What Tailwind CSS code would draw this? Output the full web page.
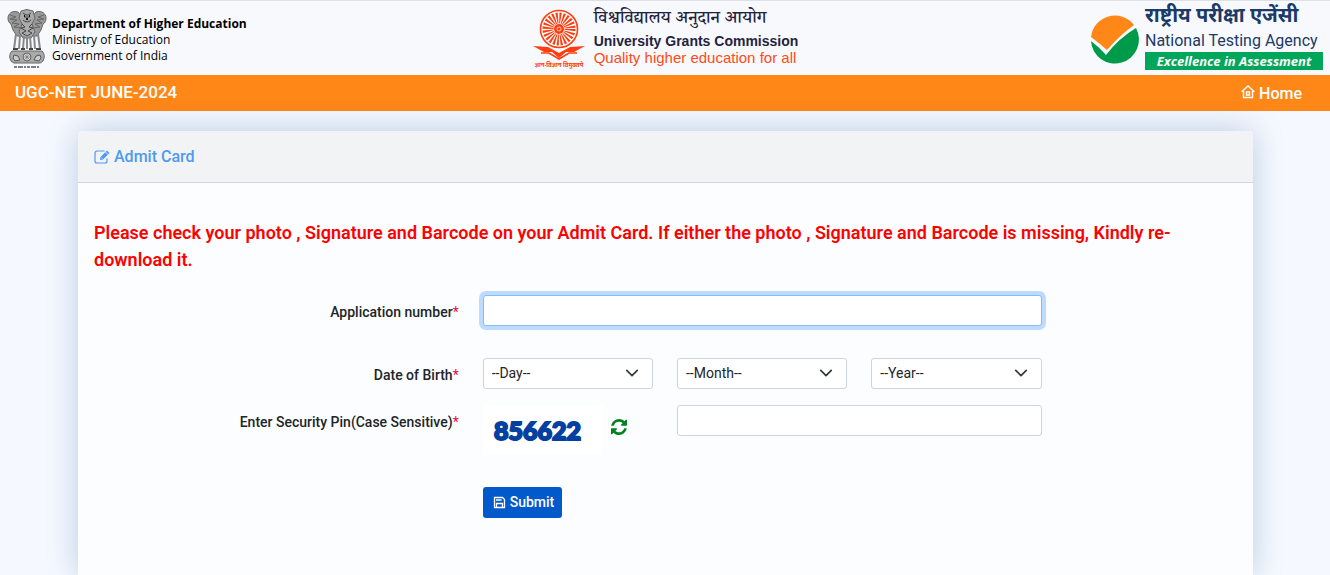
<!DOCTYPE html>
<html lang="en">
<head>
    <meta charset="UTF-8">
    <meta name="viewport" content="width=device-width, initial-scale=1.0">
    <title>UGC-NET JUNE-2024 Admit Card</title>
    <script src="https://cdn.jsdelivr.net/npm/@tailwindcss/browser@4"></script>
</head>
<body class="flex min-h-screen flex-col bg-[#f5f9ff] font-[Roboto,sans-serif] text-[#212529]">

    <!-- Logos -->
    <header class="flex h-[75px] justify-between border-t border-[#dee2e6] bg-[#f8f9fc]">
        <div class="flex flex-1 items-start gap-1 pt-2 pl-[7px]">
            <svg class="h-[60px] w-10 shrink-0" viewBox="0 0 40 60" fill="none" stroke="#666" aria-label="Emblem of India">
                <!-- side lions -->
                <path d="M11 3C5 1 1 5 1 9c0 3 1 5 3 6l2 6 4 6h5V8zM29 3c6-2 10 2 10 6 0 3-1 5-3 6l-2 6-4 6h-5V8z" fill="#999"/>
                <path d="M3 6l6 2-6 2 7 1-5 3 7 1-5 3 7 1M37 6l-6 2 6 2-7 1 5 3-7 1 5 3-7 1"/>
                <!-- middle lion -->
                <path d="M14 2q6-3 12 0l2 7-3 6 3 8-4 6h-8l-4-6 3-8-3-6z" fill="#aaa"/>
                <path d="M16 4l3 2h2l3-2M17 8h6M16 11q4 4 8 0M15 15l3 3-4 1 5 3-4 2 5 3 5-3-4-2 5-3-4-1 3-3" stroke="#444"/>
                <path d="M17 7h1M22 7h1M19 10h2" stroke="#111" stroke-width="2"/>
                <!-- legs -->
                <path d="M9 25l-2 15M13 26l-1 14M17 27l-1 13M20 28v12M23 27l1 13M27 26l1 14M31 25l2 15" stroke="#888" stroke-width="2"/>
                <path d="M6 40h5M14 40h4M22 40h4M29 40h5" stroke="#444" stroke-width="2"/>
                <!-- base -->
                <path d="M5 42q-4 4-1 10 2 3 7 2h18q5 1 7-2 3-6-1-10z" fill="#aaa" stroke="#666"/>
                <circle cx="20" cy="48" r="4" fill="#ddd"/>
                <path d="M20 44v8M16 48h8M17 45l6 6M23 45l-6 6" stroke-width=".6"/>
                <path d="M7 46l4 1 2 4-5 1-2-3zM33 46l-4 1-2 4 5 1 2-3z" fill="#ccc" stroke="#555"/>
                <path d="M7 58h26" stroke="#555" stroke-width="1.500" stroke-dasharray="3 1 5 1 2 1"/>
            </svg>
            <div class="pt-[7px] pl-px font-['Open_Sans',sans-serif] text-xs leading-4 text-black">
                <p class="font-bold">Department of Higher Education</p>
                <p>Ministry of Education</p>
                <p>Government of India</p>
            </div>
        </div>

        <div class="flex items-start gap-2">
            <svg class="mt-2 h-[60px] w-[54px] shrink-0" viewBox="0 0 54 60" aria-label="UGC logo">
                <circle cx="27" cy="20" r="18.5" fill="#fff" stroke="#ff3d10" stroke-width="1.600"/>
                <circle cx="27" cy="20" r="11" fill="none" stroke="#ff3d10" stroke-width="11" stroke-dasharray="1.6 1.28"/>
                <circle cx="27" cy="20" r="5" fill="#ff3d10"/>
                <circle cx="27" cy="20" r="2" fill="none" stroke="#fff" stroke-width=".7"/>
                <path d="M1 37l15 1 11 6 11-6 15-1-11 6H34l-7 6-7-6h-8z" fill="#ff3d10"/>
                <path d="M9 44h8l10 6 10-6h8" fill="none" stroke="#ff3d10" stroke-width="1.6"/>
                <text x="27" y="58" text-anchor="middle" font-family="Noto Sans, sans-serif" font-size="6" font-weight="700" fill="#ff3d10">ज्ञान-विज्ञान विमुक्तये</text>
            </svg>
            <div class="pt-1.5 whitespace-nowrap text-[#23233f]">
                <p class="font-['Noto_Serif_Devanagari','Noto_Sans',serif] text-lg leading-[26px] font-medium" lang="hi">विश्वविद्यालय अनुदान आयोग</p>
                <p class="font-['Liberation_Sans',sans-serif] text-sm leading-4 font-bold">University Grants Commission</p>
                <p class="font-['Liberation_Sans',sans-serif] text-[15px] leading-[18px] text-[#ff4a17]">Quality higher education for all</p>
            </div>
        </div>

        <div class="flex flex-1 items-start justify-end gap-1.5 pt-1 pr-[7px]">
            <svg class="mt-2.5 size-[49px] shrink-0" viewBox="0 0 49 49" aria-label="NTA logo">
                <path d="M1 22A24 24 0 0 1 44 10Q30 20 17 35 9 28 1 22z" fill="#ff8717"/>
                <path d="M1 26q8 6 15 14Q29 23 46 13A24 24 0 1 1 1 26z" fill="#009a4b"/>
            </svg>
            <div class="flex w-[178px] flex-col whitespace-nowrap text-[#1b3a66]">
                <p class="font-['Noto_Sans_Devanagari','Noto_Sans',sans-serif] text-xl leading-6 font-bold" lang="hi">राष्ट्रीय परीक्षा एजेंसी</p>
                <p class="text-base leading-[23px]">National Testing Agency</p>
                <p class="bg-[#00a65a] text-center font-['Open_Sans',sans-serif] text-[13px] leading-[18px] font-bold text-white italic">Excellence in Assessment</p>
            </div>
        </div>
    </header>

    <!-- Title bar -->
    <nav class="flex h-9 items-center justify-between bg-[#ff8717] pr-7 pl-[15px] text-white">
        <h1 class="text-[17px] font-medium">UGC-NET JUNE-2024</h1>
        <a href="#" class="flex items-center gap-1 pt-0.5 font-medium">
            <svg class="mb-1 size-[14px]" viewBox="0 0 14 14" fill="none" stroke="currentColor" stroke-width="1.4" aria-hidden="true">
                <path d="M.7 6.8L7 1l6.300 5.800M2.500 6v6.500h9V6"/>
                <path d="M5.500 7h3v3h-3z"/>
            </svg>
            Home
        </a>
    </nav>

    <!-- Admit card form -->
    <main class="flex flex-1 flex-col pt-5 pr-[77px] pl-[78px]">
        <section class="flex-1 rounded-t bg-[#fcfdff] shadow-[0_0_32px_rgba(8,60,130,0.24)]">
            <div class="rounded-t border-b border-[#d3d6d9] bg-[#f2f3f5] px-4 py-[13px]">
                <h2 class="flex items-center gap-1 leading-[25px] font-medium text-[#4e9af1]">
                    <svg class="size-4" viewBox="0 0 16 16" fill="none" stroke="currentColor" aria-hidden="true">
                        <path d="M10.500 2H3a2 2 0 0 0-2 2v8a2 2 0 0 0 2 2h8a2 2 0 0 0 2-2V9.500" stroke-width="1.2"/>
                        <path d="M6 11l.5-3L13 1.500 15.500 4 9 10.500z" fill="currentColor" stroke="none"/>
                        <path d="M7.500 8.500l1 1M11.500 3l2.500 2.500" stroke="#f2f3f5" stroke-width=".8"/>
                    </svg>
                    Admit Card
                </h2>
            </div>

            <form class="pt-9 pr-[17px] pl-4" onsubmit="return false">
                <p class="text-lg leading-[27px] font-semibold text-[#f00]">Please check your photo , Signature and Barcode on your Admit Card. If either the photo , Signature and Barcode is missing, Kindly re-download it.</p>

                <div class="mt-[22px] grid grid-cols-12 gap-x-6 text-sm">
                    <label for="appno" class="col-span-4 pt-[7px] text-right font-medium">Application number<span class="font-normal text-[#f00a3c]">*</span></label>
                    <input id="appno" type="text" class="col-span-6 h-[31px] rounded-[3px] border border-[#80bdff] bg-white px-2 shadow-[0_0_0_4px_#bfdaff] outline-none">
                </div>

                <div class="mt-8 grid grid-cols-12 gap-x-6 text-sm">
                    <label for="day" class="col-span-4 pt-[7px] text-right font-medium">Date of Birth<span class="font-normal text-[#f00a3c]">*</span></label>
                    <div class="relative col-span-2">
                        <select id="day" class="h-[31px] w-full appearance-none rounded-[3px] border border-[#ced4da] bg-white px-2 pb-0.5">
                            <option>--Day--</option>
                        </select>
                        <svg class="pointer-events-none absolute top-2 right-3.5 size-[14px]" viewBox="0 0 16 16" fill="none" stroke="#343a40" stroke-width="2" stroke-linecap="round" stroke-linejoin="round"><path d="M2 5l6 6 6-6"/></svg>
                    </div>
                    <div class="relative col-span-2">
                        <select aria-label="Month" class="h-[31px] w-full appearance-none rounded-[3px] border border-[#ced4da] bg-white px-2 pb-0.5">
                            <option>--Month--</option>
                        </select>
                        <svg class="pointer-events-none absolute top-2 right-3.5 size-[14px]" viewBox="0 0 16 16" fill="none" stroke="#343a40" stroke-width="2" stroke-linecap="round" stroke-linejoin="round"><path d="M2 5l6 6 6-6"/></svg>
                    </div>
                    <div class="relative col-span-2">
                        <select aria-label="Year" class="h-[31px] w-full appearance-none rounded-[3px] border border-[#ced4da] bg-white px-2 pb-0.5">
                            <option>--Year--</option>
                        </select>
                        <svg class="pointer-events-none absolute top-2 right-3.5 size-[14px]" viewBox="0 0 16 16" fill="none" stroke="#343a40" stroke-width="2" stroke-linecap="round" stroke-linejoin="round"><path d="M2 5l6 6 6-6"/></svg>
                    </div>
                </div>

                <div class="mt-4 grid grid-cols-12 items-start gap-x-6 text-sm">
                    <label for="pin" class="col-span-4 pt-[7px] text-right font-medium">Enter Security Pin(Case Sensitive)<span class="font-normal text-[#f00a3c]">*</span></label>
                    <div class="col-span-2 flex gap-2">
                        <svg class="h-[50px] w-[120px] bg-white" viewBox="0 0 120 50" font-family="Lato, sans-serif" font-size="25" font-weight="900" fill="#0440a0" stroke="#0440a0" stroke-width="2" aria-label="Captcha">
                            <text x="11" y="35">856622</text>
                        </svg>
                        <button type="button" class="mt-3 h-5" aria-label="Refresh captcha">
                            <svg class="size-4" viewBox="0 0 1536 1536" fill="#008020" aria-hidden="true">
                                <path d="M1511 928q0 5-1 7-64 268-268 434.500T764 1536q-146 0-282.500-55T238 1324l-129 129q-19 19-45 19t-45-19-19-45V960q0-26 19-45t45-19h448q26 0 45 19t19 45-19 45l-137 137q71 66 161 102t187 36q134 0 250-65t186-179q11-17 53-117 8-23 30-23h192q13 0 22.500 9.500t9.500 22.500zM1536 128v448q0 26-19 45t-45 19h-448q-26 0-45-19t-19-45 19-45l138-138Q969 256 768 256q-134 0-250 65T332 500q-11 17-53 117-8 23-30 23H50q-13 0-22.500-9.500T18 608v-7q65-268 270-434.500T768 0q146 0 284 55.500T1297 212l130-129q19-19 45-19t45 19 19 45z"/>
                            </svg>
                        </button>
                    </div>
                    <input id="pin" type="text" class="col-span-4 h-[31px] rounded-[3px] border border-[#ced4da] bg-white px-2 outline-none">
                </div>

                <div class="mt-8 grid grid-cols-12 gap-x-6">
                    <button type="submit" class="col-span-2 col-start-5 flex h-[31px] items-center gap-1 justify-self-start rounded-[3px] bg-[#0259cb] px-2 pb-px pl-2.5 text-sm font-medium text-white">
                        <svg class="size-[13px]" viewBox="0 0 13 13" fill="none" stroke="currentColor" stroke-width="1.3" aria-hidden="true">
                            <path d="M1.500 1.500h8l2 2v8h-10z"/>
                            <path d="M3.500 11V7.500h6V11M3 4h5.500"/>
                        </svg>
                        Submit
                    </button>
                </div>
            </form>
        </section>
    </main>

</body>
</html>
